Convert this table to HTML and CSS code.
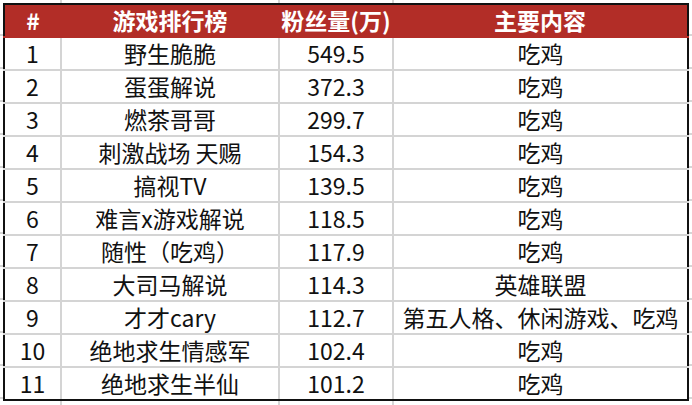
FILE: index.html
```html
<!DOCTYPE html>
<html lang="zh-CN">
<head>
<meta charset="utf-8">
<title>游戏排行榜</title>
<link rel="stylesheet" href="styles.css">
</head>
<body>
<div class="sheet">
  <table class="rank">
    <colgroup>
      <col class="c-no">
      <col class="c-name">
      <col class="c-fans">
      <col class="c-topic">
    </colgroup>
    <thead>
      <tr><th>#</th><th>游戏排行榜</th><th>粉丝量(万)</th><th>主要内容</th></tr>
    </thead>
    <tbody>
      <tr><td>1</td><td>野生脆脆</td><td>549.5</td><td>吃鸡</td></tr>
      <tr><td>2</td><td>蛋蛋解说</td><td>372.3</td><td>吃鸡</td></tr>
      <tr><td>3</td><td>燃茶哥哥</td><td>299.7</td><td>吃鸡</td></tr>
      <tr><td>4</td><td>刺激战场 天赐</td><td>154.3</td><td>吃鸡</td></tr>
      <tr><td>5</td><td>搞视TV</td><td>139.5</td><td>吃鸡</td></tr>
      <tr><td>6</td><td>难言x游戏解说</td><td>118.5</td><td>吃鸡</td></tr>
      <tr><td>7</td><td>随性（吃鸡）</td><td>117.9</td><td>吃鸡</td></tr>
      <tr><td>8</td><td>大司马解说</td><td>114.3</td><td>英雄联盟</td></tr>
      <tr><td>9</td><td>才才cary</td><td>112.7</td><td>第五人格、休闲游戏、吃鸡</td></tr>
      <tr><td>10</td><td>绝地求生情感军</td><td>102.4</td><td>吃鸡</td></tr>
      <tr><td>11</td><td>绝地求生半仙</td><td>101.2</td><td>吃鸡</td></tr>
    </tbody>
  </table>
</div>
</body>
</html>
```
FILE: styles.css
```css
html, body {
  margin: 0;
  padding: 0;
  background: #fff;
}

.sheet {
  width: 692px;
  height: 405px;
  box-sizing: border-box;
  padding: 3px 0 0 3px;
  background-color: #fff;
  background-image:
    linear-gradient(to right, transparent 60px, #d6d6d6 60px, #d6d6d6 62px, transparent 62px),
    linear-gradient(to right, transparent 278px, #d6d6d6 278px, #d6d6d6 280px, transparent 280px),
    linear-gradient(to right, transparent 392px, #d6d6d6 392px, #d6d6d6 394px, transparent 394px),
    repeating-linear-gradient(to bottom, transparent 0, transparent 31px, #d6d6d6 31px, #d6d6d6 33px);
  background-position: 0 0, 0 0, 0 0, 0 3px;
  font-family: "Noto Sans CJK SC", "Noto Sans", sans-serif;
}

.rank {
  border-collapse: collapse;
  table-layout: fixed;
  width: 684px;
  border: 2px solid #111;
  background: #fff;
  font-size: 23px;
  color: #111;
}

.c-no { width: 57px; }
.c-name { width: 218px; }
.c-fans { width: 114px; }
.c-topic { width: 295px; }

.rank th,
.rank td {
  padding: 0;
  text-align: center;
  white-space: nowrap;
  line-height: 31px;
  height: 31px;
}

.rank th {
  background: #b22d27;
  color: #fff;
  font-weight: bold;
  border: none;
  border-bottom: 2px solid #b22d27;
}

.rank td {
  border: 2px solid #d4d4d4;
}

.rank tbody tr:last-child td {
  border-bottom: 2px solid #111;
}

.rank td:first-child { border-left: 2px solid #111; }
.rank td:last-child { border-right: 2px solid #111; }
```
